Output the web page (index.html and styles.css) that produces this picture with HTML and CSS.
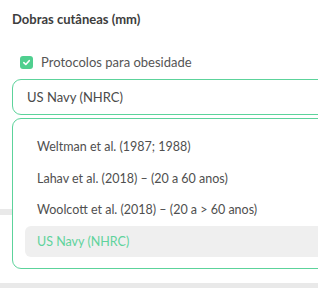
FILE: index.html
```html
<!DOCTYPE html>
<html lang="pt">
<head>
    <meta charset="UTF-8">
    <title>Dobras cutâneas</title>
    <link rel="stylesheet" href="styles.css">
</head>
<body>
    <div class="card">
        <h3 class="title">Dobras cutâneas (mm)</h3>
        <label class="check">
            <span class="box">
                <svg width="9" height="9" viewBox="0 0 10 10"><path d="M2 5.2 L4.2 7.2 L8 3" fill="none" stroke="#fff" stroke-width="1.8" stroke-linecap="round" stroke-linejoin="round"/></svg>
            </span>
            Protocolos para obesidade
        </label>
        <div class="select-wrap">
            <div class="select">US Navy (NHRC)</div>
            <ul class="menu">
                <li>Weltman et al. (1987; 1988)</li>
                <li>Lahav et al. (2018) – (20 a 60 anos)</li>
                <li>Woolcott et al. (2018) – (20 a &gt; 60 anos)</li>
                <li class="active">US Navy (NHRC)</li>
            </ul>
        </div>
        <div class="rows">
            <div class="row"></div>
        </div>
    </div>
    <div class="footer-bar"></div>
</body>
</html>
```
FILE: styles.css
```css
body {
    margin: 0;
    width: 318px;
    height: 288px;
    overflow: hidden;
    background: #fff;
    font-family: Lato, "Open Sans", sans-serif;
    color: #4f4f4f;
}
.card {
    padding: 11px 0 0 12px;
    height: 272px;
    box-sizing: border-box;
    overflow: hidden;
}
.title {
    margin: 0;
    font-size: 13px;
    font-weight: 700;
    color: #3d3d3d;
    line-height: 16px;
}
.check {
    display: flex;
    align-items: center;
    gap: 8px;
    margin: 27px 0 0 8px;
    font-size: 13px;
    line-height: 16px;
    color: #555;
}
.box {
    width: 13px;
    height: 13px;
    border-radius: 3px;
    background: #4fcf8f;
    display: flex;
    align-items: center;
    justify-content: center;
}
.select-wrap {
    position: relative;
    margin-top: 9px;
    margin-right: -24px;
}
.select {
    height: 34px;
    border: 1px solid #5cd39b;
    border-radius: 9px;
    padding-left: 14px;
    display: flex;
    align-items: center;
    font-size: 13px;
    color: #4a4a4a;
}
.menu {
    position: absolute;
    top: 39px;
    left: 0;
    right: 0;
    margin: 0;
    list-style: none;
    padding: 12px 0 11px 12px;
    background: #fff;
    border: 1px solid #5cd39b;
    border-radius: 9px;
    z-index: 2;
}
.menu li {
    height: 31.5px;
    display: flex;
    align-items: center;
    padding-left: 12px;
    font-size: 12.5px;
    color: #4f4f4f;
}
.menu li.active {
    background: #efefef;
    border-radius: 6px;
    color: #5fd39c;
}
.rows {
    margin-top: 94px;
    margin-left: -12px;
}
.row {
    height: 6px;
    background: #e9e9e9;
}
.footer-bar {
    height: 16px;
    background: #e9e9e9;
    margin-top: 11px;
}
```
